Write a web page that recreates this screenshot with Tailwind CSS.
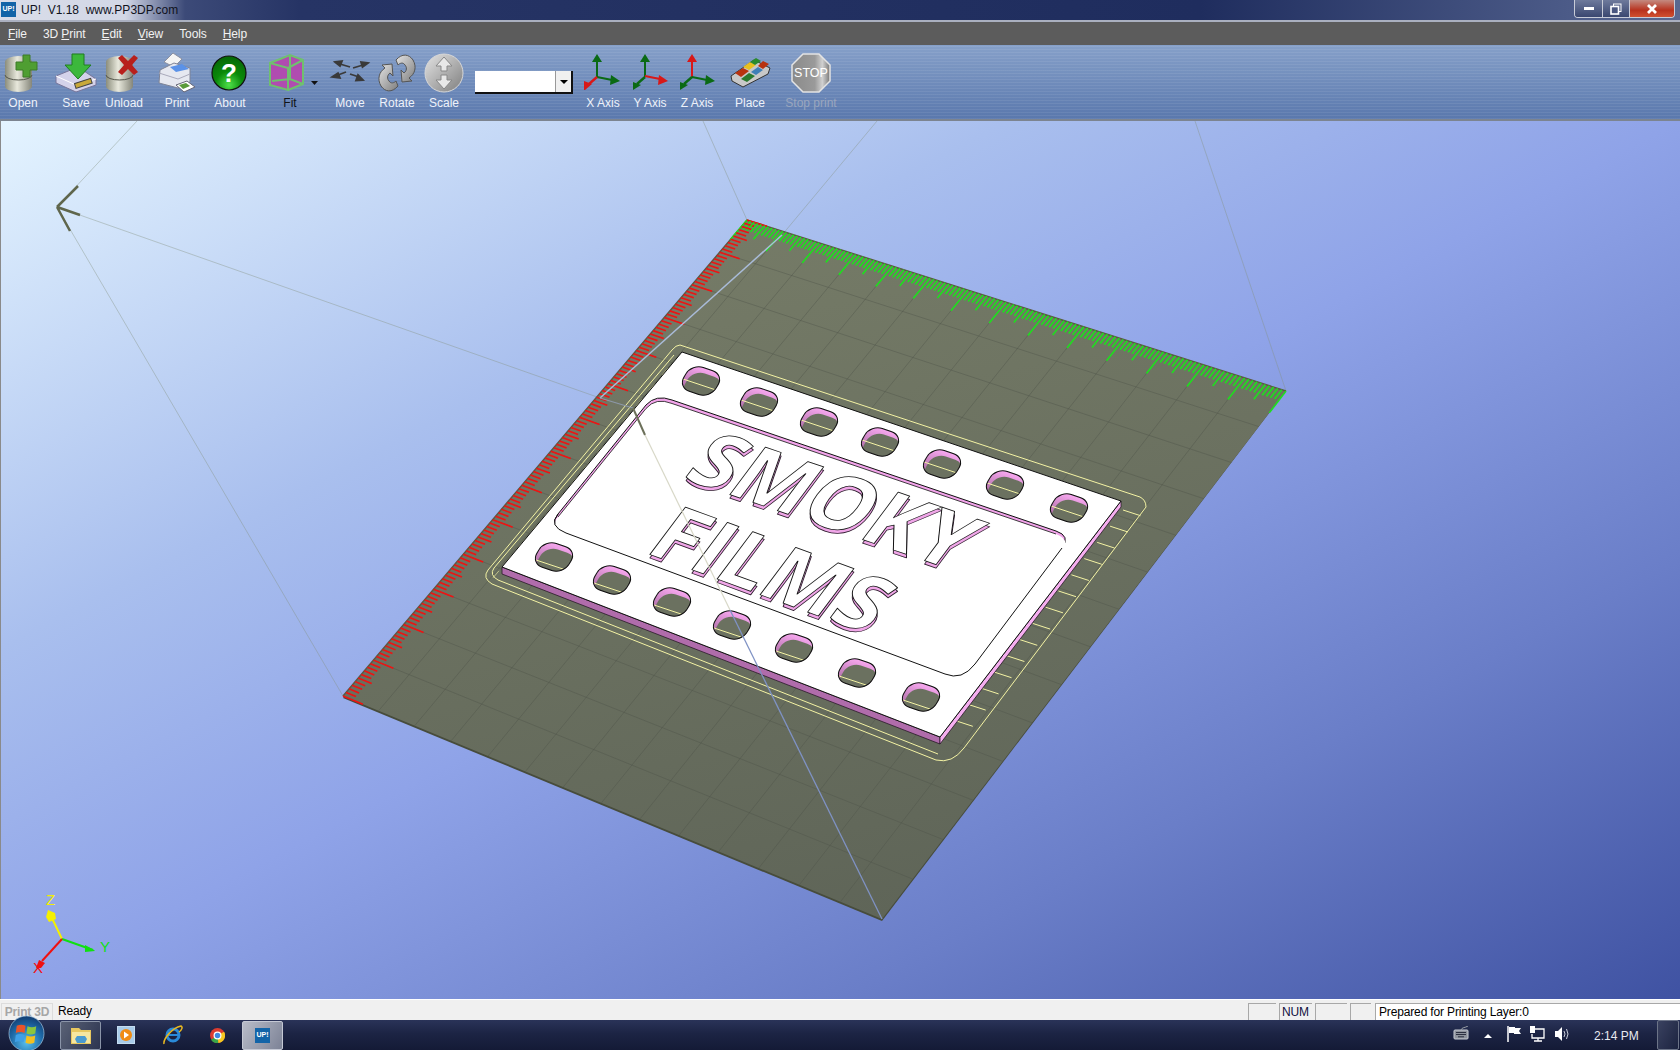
<!DOCTYPE html>
<html lang="en">
<head>
    <meta charset="UTF-8">
    <title>UP! V1.18 www.PP3DP.com</title>
    <script src="https://cdn.jsdelivr.net/npm/@tailwindcss/browser@4"></script>
</head>
<body class="w-[1680px] h-[1050px] overflow-hidden flex flex-col font-['Liberation_Sans',sans-serif] text-[12px]">

    <!-- shared gradients -->
    <svg class="absolute w-0 h-0">
        <defs>
            <linearGradient id="can" x1="0" x2="1" y1="0" y2="0"><stop offset="0" stop-color="#8b8d7c"/><stop offset=".45" stop-color="#e8e8dc"/><stop offset="1" stop-color="#85867a"/></linearGradient>
            <linearGradient id="gray" x1="0" x2="1" y1="0" y2="1"><stop offset="0" stop-color="#e4e4e4"/><stop offset="1" stop-color="#7e7e7e"/></linearGradient>
            <radialGradient id="green" cx=".5" cy=".85" r=".8"><stop offset="0" stop-color="#4fe04a"/><stop offset=".5" stop-color="#0a8a0a"/><stop offset="1" stop-color="#066a06"/></radialGradient>
            <radialGradient id="orb" cx=".5" cy=".75" r=".75"><stop offset="0" stop-color="#58c0f0"/><stop offset=".6" stop-color="#1e6aa8"/><stop offset="1" stop-color="#123c70"/></radialGradient>
            <linearGradient id="stop" x1="0" x2="1" y1="0" y2="0"><stop offset="0" stop-color="#8a8a8a"/><stop offset=".6" stop-color="#9a9a9a"/><stop offset=".8" stop-color="#d0d0d0"/><stop offset="1" stop-color="#777"/></linearGradient>
            <linearGradient id="deck" gradientUnits="userSpaceOnUse" x1="747" y1="220" x2="882" y2="919"><stop offset="0" stop-color="#757b67"/><stop offset="1" stop-color="#5f6558"/></linearGradient>
            <linearGradient id="wall" x1="0" x2="0" y1="0" y2="1"><stop offset="0" stop-color="#f8a8f0"/><stop offset="1" stop-color="#a86aa0"/></linearGradient>
        </defs>
    </svg>

    <!-- title bar -->
    <header class="h-[22px] shrink-0 flex items-start border-b-2 border-b-[#aab0c0] bg-[linear-gradient(to_right,#d9dde9_0,#d2d7e6_125px,#3c4a78_185px,#263465_300px,#1f2d5e_1200px,#4c5b88_1570px,#5a6890_1680px)]">
        <div class="w-[15px] h-[15px] mt-[2px] ml-[1px] bg-[#1264a8] text-white text-[7px] font-bold flex items-center justify-center">UP!</div>
        <div class="ml-[5px] mt-[2px] text-[12px] leading-[16px] text-[#10121c] whitespace-pre">UP!  V1.18  www.PP3DP.com</div>
        <div class="ml-auto mr-[5px] flex h-[18px] border border-t-0 border-[#c8ccd8] rounded-b-[4px] overflow-hidden">
            <div class="w-[28px] flex items-center justify-center border-r border-[#c8ccd8] bg-[linear-gradient(#6e7a9c,#3a4770)]"><div class="w-[10px] h-[3px] bg-white"></div></div>
            <div class="w-[27px] flex items-center justify-center border-r border-[#c8ccd8] bg-[linear-gradient(#6e7a9c,#3a4770)]">
                <svg viewBox="0 0 12 12" class="w-[12px] h-[12px]"><rect x="3.5" y="1" width="7.5" height="7.5" fill="none" stroke="#fff"/><rect x="1" y="3.5" width="7.5" height="7.5" fill="#4a5780" stroke="#fff" stroke-width="1.6"/></svg>
            </div>
            <div class="w-[44px] flex items-center justify-center bg-[linear-gradient(#c48a80,#b8321e_60%,#d05030)]">
                <svg viewBox="0 0 12 12" class="w-[12px] h-[12px]"><path d="M2 2l8 8M10 2l-8 8" stroke="#fff" stroke-width="2.8"/></svg>
            </div>
        </div>
    </header>

    <!-- menu -->
    <nav class="h-[23px] shrink-0 bg-[#5c5c5c] text-[#f2f2f2] flex items-center pl-[8px] gap-[16px] text-[12px] tracking-[-.1px]">
        <span><u>F</u>ile</span><span>3D <u>P</u>rint</span><span><u>E</u>dit</span><span><u>V</u>iew</span><span>Tools</span><span><u>H</u>elp</span>
    </nav>

    <!-- toolbar -->
    <div class="h-[76px] shrink-0 flex pt-[5px] text-[#eef2fa] border-b-2 border-b-[#7c8490] [background:repeating-linear-gradient(0deg,rgba(255,255,255,.07)_0_1px,transparent_1px_3px),linear-gradient(#86a0c9,#5a78ad)]">
        <div class="w-[46px] flex flex-col items-center">
            <svg viewBox="1 50 44 44" class="w-[44px] h-[44px] shrink-0 overflow-visible">
                <path d="M5 62a13.500 6 0 0 1 27 0v24a13.500 6 0 0 1-27 0z" fill="url(#can)"/><path d="M5 75a13.500 5 0 0 0 27 0" fill="none" stroke="#55564c"/>
                <path d="M23 55h7v7h7v8h-7v7h-7v-7h-7v-8h7z" fill="#4f9e32" stroke="#3c7a26"/>
            </svg>
            <span class="leading-[14px] mt-[2px]">Open</span>
        </div>
        <div class="w-[60px] flex flex-col items-center">
            <svg viewBox="54 50 44 44" class="w-[44px] h-[44px] shrink-0 overflow-visible">
                <path d="M56 76l22-9 18 12v6l-20 7-20-9z" fill="#d4d2ea" stroke="#77759a"/><path d="M56 76l20 9 20-6" fill="none" stroke="#fff"/>
                <rect x="75" y="81" width="17" height="5" fill="#c8a83a" stroke="#444" transform="rotate(-18 83 84)"/>
                <path d="M72 54h12v11h7l-13 14-13-14h7z" fill="#3cb83c" stroke="#1f7d1f"/>
            </svg>
            <span class="leading-[14px] mt-[2px]">Save</span>
        </div>
        <div class="w-[36px] flex flex-col items-center">
            <svg viewBox="102 50 44 44" class="w-[44px] h-[44px] shrink-0 overflow-visible">
                <path d="M106 62a13.500 6 0 0 1 27 0v24a13.500 6 0 0 1-27 0z" fill="url(#can)"/><path d="M106 75a13.500 5 0 0 0 27 0" fill="none" stroke="#55564c"/>
                <path d="M118 58l4-3 6 6 6-6 4 3-6 7 6 7-4 3-6-6-6 6-4-3 6-7z" fill="#b8201c"/>
            </svg>
            <span class="leading-[14px] mt-[2px]">Unload</span>
        </div>
        <div class="w-[70px] flex flex-col items-center">
            <svg viewBox="155 50 44 44" class="w-[44px] h-[44px] shrink-0 overflow-visible">
                <path d="M164 62l9-9 9 6-8 8z" fill="#f4f4f4" stroke="#8a8fa0"/>
                <path d="M160 70l14-7 16 5v14l-12 6-19-5z" fill="#e6e8f0" stroke="#7f8496"/>
                <path d="M170 67l12-3 7 5-13 3z" fill="#5b92e8"/><path d="M159 73l19 6 12-5" fill="none" stroke="#aab"/>
                <path d="M176 85l11-4 8 6-11 5z" fill="#fff" stroke="#667"/><path d="M179 85l7-2 4 3-7 3z" fill="#5a9a3a"/>
            </svg>
            <span class="leading-[14px] mt-[2px]">Print</span>
        </div>
        <div class="w-[36px] flex flex-col items-center">
            <svg viewBox="208 50 44 44" class="w-[44px] h-[44px] shrink-0 overflow-visible">
                <circle cx="229" cy="73" r="17" fill="url(#green)" stroke="#111" stroke-width="1.2"/>
                <text x="229" y="82" text-anchor="middle" font-family="Liberation Sans" font-weight="700" font-size="26" fill="#fff">?</text>
            </svg>
            <span class="leading-[14px] mt-[2px]">About</span>
        </div>
        <div class="w-[84px] flex flex-col items-center text-[#101418]">
            <svg viewBox="268 50 44 44" class="w-[44px] h-[44px] shrink-0 overflow-visible">
                <path d="M270 63l20-8 13 5v24l-15 6-18-5z" fill="#b04cb0"/>
                <path d="M270 63l18 5v22l-18-5zM288 68l15-8M290 55v24M272 81l18-2 13 5M270 63l20-8 13 5v24l-15 6" fill="none" stroke="#6fc06f" stroke-width="2"/>
                <path d="M311 81h7l-3.500 4z" fill="#111"/>
            </svg>
            <span class="leading-[14px] mt-[2px]">Fit</span>
        </div>
        <div class="w-[36px] flex flex-col items-center">
            <svg viewBox="328 50 44 44" class="w-[44px] h-[44px] shrink-0 overflow-visible">
                <g fill="#3a3a3a" stroke="#3a3a3a" stroke-width="1.800">
                    <path d="M335 62l7-1-2 5z"/><path d="M340 64l10 3"/>
                    <path d="M368 63l-7-1 1.500 5z"/><path d="M363 65l-10 3"/>
                    <path d="M332 77l6-4 2 5z"/><path d="M338 75l8-3"/>
                    <path d="M363 80l-7 .5 2-5.500z"/><path d="M359 77l-9-3"/>
                </g>
            </svg>
            <span class="leading-[14px] mt-[2px]">Move</span>
        </div>
        <div class="w-[58px] flex flex-col items-center">
            <svg viewBox="375 50 44 44" class="w-[44px] h-[44px] shrink-0 overflow-visible">
                <path d="M396 60c6-7 13-6 17 0 4 7 2 14-4 18l3 3-10 1-1-12 3 3c3-2 3-6 1-8-2-3-5-2-7 0z" fill="url(#gray)" stroke="#555"/>
                <path d="M398 86c-6 7-13 6-17 0-4-7-2-14 4-18l-3-3 10-1 1 12-3-3c-3 2-3 6-1 8 2 3 5 2 7 0z" fill="url(#gray)" stroke="#555"/>
            </svg>
            <span class="leading-[14px] mt-[2px]">Rotate</span>
        </div>
        <div class="w-[36px] flex flex-col items-center">
            <svg viewBox="422 50 44 44" class="w-[44px] h-[44px] shrink-0 overflow-visible">
                <circle cx="444" cy="73" r="19" fill="url(#gray)" stroke="#d8d8d8"/>
                <path d="M444 57l8 9h-5v5h-6v-5h-5zM444 89l8-9h-5v-5h-6v5h-5z" fill="#e8e8e8" stroke="#888"/>
            </svg>
            <span class="leading-[14px] mt-[2px]">Scale</span>
        </div>
        <div class="ml-[13px] mt-[21px] w-[98px] h-[23px] shrink-0 bg-white flex justify-end border-r-2 border-b-2 border-[#111]">
            <div class="w-[16px] h-full bg-[#f0f0f0] border-l border-[#999] flex items-center justify-center"><div class="w-0 h-0 border-x-[4px] border-x-transparent border-t-[4px] border-t-black"></div></div>
        </div>
        <div class="w-[60px] flex flex-col items-center">
            <svg viewBox="581 50 44 44" class="w-[44px] h-[44px] shrink-0 overflow-visible">
                <path d="M597 77V60" stroke="#0a6a14" stroke-width="2"/><path d="M592 62l5-8 5 8z" fill="#0a6a14"/>
                <path d="M597 77l15 3" stroke="#0a6a14" stroke-width="2"/><path d="M611 75l9 6-10 4z" fill="#0a6a14"/>
                <path d="M597 77l-8 7" stroke="#d81818" stroke-width="2.400"/><path d="M584 81l8 3-7 6-1 0z" fill="#d81818"/>
            </svg>
            <span class="leading-[14px] mt-[2px]">X Axis</span>
        </div>
        <div class="w-[34px] flex flex-col items-center">
            <svg viewBox="580 50 44 44" class="w-[44px] h-[44px] shrink-0 overflow-visible">
                <path d="M597 77V60" stroke="#0a6a14" stroke-width="2"/><path d="M592 62l5-8 5 8z" fill="#0a6a14"/>
                <path d="M597 76l15 3" stroke="#d81818" stroke-width="2"/><path d="M611 75l9 6-10 4z" fill="#d81818"/>
                <path d="M597 77l-8 7" stroke="#0a6a14" stroke-width="2.400"/><path d="M585 82l8 3-8 5z" fill="#0a6a14"/>
            </svg>
            <span class="leading-[14px] mt-[2px]">Y Axis</span>
        </div>
        <div class="w-[60px] flex flex-col items-center">
            <svg viewBox="580 50 44 44" class="w-[44px] h-[44px] shrink-0 overflow-visible">
                <path d="M597 77V60" stroke="#d81818" stroke-width="2"/><path d="M592 62l5-8 5 8z" fill="#d81818"/>
                <path d="M597 77l15 3" stroke="#0a6a14" stroke-width="2"/><path d="M611 75l9 6-10 4z" fill="#0a6a14"/>
                <path d="M597 77l-8 7" stroke="#0a6a14" stroke-width="2.400"/><path d="M585 82l8 3-8 5z" fill="#0a6a14"/>
            </svg>
            <span class="leading-[14px] mt-[2px]">Z Axis</span>
        </div>
        <div class="w-[46px] flex flex-col items-center">
            <svg viewBox="728 50 44 44" class="w-[44px] h-[44px] shrink-0 overflow-visible">
                <path d="M731 76l23-16 16 8-2 6-25 13-11-6z" fill="#c8c8c8" stroke="#333"/>
                <path d="M735 73l8-5 6 3-8 6z" fill="#b8320f"/><path d="M741 79l8-6 6 3-8 6z" fill="#2a7a2e"/>
                <path d="M743 67l7-5 6 3-7 5z" fill="#e8c020"/><path d="M751 72l7-5 5 3-7 5z" fill="#3f7fb8"/>
                <path d="M750 62l6-4 5 3-6 4z" fill="#2a8a2e"/><path d="M758 66l5-5 6 3-6 5z" fill="#b8320f"/>
            </svg>
            <span class="leading-[14px] mt-[2px]">Place</span>
        </div>
        <div class="w-[76px] flex flex-col items-center text-[#9aa6be]">
            <svg viewBox="789 50 44 44" class="w-[44px] h-[44px] shrink-0 overflow-visible">
                <path d="M803 54h16l11 11v16l-11 11h-16l-11-11v-16z" fill="url(#stop)" stroke="#e4e4e4" stroke-width="1.500"/>
                <text x="811" y="77" text-anchor="middle" font-family="Liberation Sans" font-size="12.500" fill="#fff">STOP</text>
            </svg>
            <span class="leading-[14px] mt-[2px]">Stop print</span>
        </div>
    </div>

    <!-- 3D view -->
    <main class="flex-1 min-h-0 border-l border-[#8a8a8a] bg-[linear-gradient(to_bottom_right,#e4f4ff_0%,#a9bfee_30%,#8fa3e8_50%,#6a7ec8_75%,#3f52a2_100%)]">
        <svg id="scene" viewBox="1 121 1679 878" class="w-full h-full block">
            <g fill="none" stroke="#85907f" stroke-opacity=".4">
                <path d="M57 207L137 121M57 207L343 696M57 207L600 398M747 220L703 121M782 235L877 121M1286 391L1195 121"/>
            </g>
            <path d="M57 207L78 186M57 207L80 215M57 207L70 231" stroke="#5f664c" stroke-width="2.500" fill="none"/>

            <path d="M747 220L1286 391L882 921L343 698z" fill="#474c3c"/>
            <path d="M747 220L1286 391L882 919L343 696z" fill="url(#deck)"/>
            <path d="M343 696L747 220L1286 391" fill="none" stroke="#5a5a44" stroke-width="1.500"/>
            <g id="grid" stroke="#4d5248" stroke-opacity=".4" fill="none"></g>
            <g id="ticks" fill="none" stroke-width="1.600"></g>

            <!-- brim lines round the part -->
            <g id="brim" fill="none" stroke="#f4f3a4" stroke-width="1">
                <path d="M680 345L1140 497Q1146 500 1146 507L964 748Q952 764 936 760L492 584Q482 578 488 570L672 350Q676 345 680 345z"/>
                <path d="M938 754L498 580Q489 575 494 568L674 355"/>
            </g>

            <!-- plate -->
            <path d="M502 567L940 737L940 744L502 574z" fill="#b06cab" stroke="#2a1a2a" stroke-width=".8"/>
            <path d="M940 737L1121 501L1121 507L940 744z" fill="#f6aef0" stroke="#2a1a2a" stroke-width=".8"/>
            <path d="M682 352L1121 501L940 737L502 567z" fill="#fff" stroke="#111" stroke-width="1"/>
            <g id="holes"></g>

            <!-- recessed frame -->
            <path d="M672 400L1056 531Q1071 536 1062 548L975 664Q962 681 945 674L566 533Q548 526 558 514L646 405Q656 394 672 400z" fill="#f2a4ea" stroke="#111"/>
            <path d="M672 403.500L1056 534Q1071 540 1062 551L975 667Q962 684 945 677L566 536Q548 529 558 517L646 408.500Q656 397 672 403.500z" fill="#fff"/>
            <path d="M558 517L646 408.500Q656 397 672 403.500L1056 534" fill="none" stroke="#111" stroke-width=".8"/>
            <path d="M1062 548L975 664Q962 681 945 674L566 533Q548 526 558 514" fill="none" stroke="#111"/>

            <!-- lettering on the part -->
            <g font-family="Open Sans" font-weight="700" font-size="83" stroke-linejoin="round">
                <g fill="#f0a6e8" stroke="#2a1a2a" stroke-width=".9">
                    <text transform="matrix(.92 .312 -.6 .8 681 481.500)">SMOKY</text>
                    <text transform="matrix(.92 .335 -.6 .8 643 555.500)">FILMS</text>
                </g>
                <g fill="#fff" stroke="#111" stroke-width=".9">
                    <text transform="matrix(.92 .312 -.6 .8 681 478)">SMOKY</text>
                    <text transform="matrix(.92 .335 -.6 .8 643 552)">FILMS</text>
                </g>
            </g>

            <!-- wireframe lines over the model -->
            <path d="M782 235L600 398" stroke="#a9bbd8" stroke-width="1.500" fill="none"/>
            <path d="M600 398L633 408" stroke="#8c98a8" stroke-width="1.200" fill="none"/>
            <path d="M633 408L645 435" stroke="#6c705a" stroke-width="2" fill="none"/>
            <path d="M645 435L730 610" stroke="#d8d8c8" stroke-width="1.200" fill="none"/>
            <path d="M730 610L882 919" stroke="#7f92c4" stroke-width="1.300" fill="none"/>

            <!-- axis triad -->
            <path d="M62 939L50 914" stroke="#f4f000" stroke-width="2"/>
            <path d="M48 910l7 3 1 6-7 3-3-5z" fill="#f4f000"/>
            <path d="M62 939L93 950" stroke="#10e010" stroke-width="2"/>
            <path d="M85 945l9 5 1 1-10 1z" fill="#10e010"/>
            <path d="M62 939L42 961" stroke="#f01010" stroke-width="2"/>
            <path d="M39 960l6 3-4 5-5 0z" fill="#f01010"/>
            <g font-family="Liberation Sans" font-size="15">
                <text x="46" y="905" fill="#f4f000">Z</text>
                <text x="100" y="952" fill="#10e010">Y</text>
                <text x="33" y="973" fill="#f01010">X</text>
            </g>
        </svg>
    </main>

    <!-- status bar -->
    <div class="h-[21px] shrink-0 bg-[#f0f0f0] border-t border-white flex items-end text-[12px] tracking-[-.15px] leading-[16px] text-black">
        <div class="w-[52px] h-[17px] ml-[1px] text-center text-[#a6a6a6] font-bold border border-[#dcdcdc] border-b-0 text-[12px] tracking-[-.2px]">Print 3D</div>
        <div class="ml-[5px] h-[17px]">Ready</div>
        <div class="ml-auto w-[28px] h-[17px] border-l border-t border-[#a8a8a8]"></div>
        <div class="ml-[3px] w-[33px] h-[17px] border-l border-t border-[#a8a8a8] pl-[2px] text-[#101040]">NUM</div>
        <div class="ml-[3px] w-[32px] h-[17px] border-l border-t border-[#a8a8a8]"></div>
        <div class="ml-[3px] w-[21px] h-[17px] border-l border-t border-[#a8a8a8]"></div>
        <div class="ml-[4px] w-[305px] h-[17px] border-l border-t border-[#a8a8a8] bg-white pl-[3px]">Prepared for Printing Layer:0</div>
    </div>

    <!-- taskbar -->
    <footer class="relative h-[30px] shrink-0 flex items-center text-white bg-[linear-gradient(#2a3358,#1c2444_45%,#141a36)]">
        <svg viewBox="0 0 38 38" class="absolute left-[8px] top-[-5px] w-[37px] h-[37px]">
            <circle cx="19" cy="19" r="18" fill="url(#orb)" stroke="#a8c8e0" stroke-opacity=".7"/>
            <path d="M9 11q4.500-2 9 0l-1 7.500q-4.500-2-9 0z" fill="#e8542a"/>
            <path d="M20 11.500q4.500 2 9 0l-1 7.500q-4.500 2-9 0z" fill="#8cc63e"/>
            <path d="M8 20.500q4.500-2 9 0l-1 7.500q-4.500-2-9 0z" fill="#3fa0e8"/>
            <path d="M19 21q4.500 2 9 0l-1 7.500q-4.500 2-9 0z" fill="#f4c020"/>
        </svg>
        <div class="ml-[60px] w-[41px] h-[29px] rounded-[2px] border border-[#8a94a8] bg-[linear-gradient(120deg,#5a6276,#2c3450)] flex items-center justify-center">
            <svg viewBox="0 0 24 22" class="w-[24px] h-[22px]"><path d="M2 4h8l2 2h10v14H2z" fill="#e8c860"/><rect x="3" y="8" width="18" height="11" fill="#f6e6a0"/><path d="M8 12h8l2 3-2 4H8l-2-4z" fill="#4a9ad0"/></svg>
        </div>
        <svg viewBox="0 0 18 18" class="ml-[16px] w-[18px] h-[18px]"><rect width="18" height="18" fill="#c4dcf0"/><rect x="1" y="1" width="16" height="16" fill="#a8cbe8"/><circle cx="9" cy="9" r="6" fill="#f08c14"/><path d="M7 5.500l5 3.500-5 3.500z" fill="#fff"/></svg>
        <svg viewBox="0 0 20 20" class="ml-[28px] w-[20px] h-[20px]"><circle cx="10" cy="10" r="6" fill="none" stroke="#2a8ad8" stroke-width="3"/><path d="M5 10h10" stroke="#2a8ad8" stroke-width="2"/><path d="M1 19C0 14 9 3 18 1c2 1 1 4-2 6" fill="none" stroke="#e8b820" stroke-width="1.500"/></svg>
        <svg viewBox="0 0 16 16" class="ml-[27px] w-[15px] h-[15px]"><circle cx="8" cy="8" r="8" fill="#dc3c30"/><path d="M8 8L1 12.500A8 8 0 0 0 9 16z" fill="#3aa648"/><path d="M8 8L9 16A8 8 0 0 0 15 4z" fill="#f6c820"/><circle cx="8" cy="8" r="3.600" fill="#3f88e0" stroke="#fff" stroke-width="1.300"/></svg>
        <div class="ml-[17px] w-[41px] h-[29px] rounded-[2px] border border-[#c4c8d4] bg-[linear-gradient(120deg,#b8bcc8,#7c8296)] flex items-center justify-center">
            <div class="w-[15px] h-[15px] bg-[#1264a8] text-white text-[7px] font-bold flex items-center justify-center">UP!</div>
        </div>
        <svg viewBox="0 0 16 14" class="absolute left-[1453px] top-[6px] w-[16px] h-[14px]"><rect x="1" y="4" width="14" height="9" rx="1" fill="#8e939c" stroke="#c8ccd4"/><path d="M3 6.500h10M3 8.500h10M5 10.800h6" stroke="#2c3040"/><path d="M8 4C9 1 12 2 15 0" stroke="#9aa0a8" fill="none"/></svg>
        <div class="absolute left-[1484px] top-[14px] w-0 h-0 border-x-[4px] border-x-transparent border-b-[4px] border-b-white"></div>
        <svg viewBox="0 0 16 18" class="absolute left-[1506px] top-[5px] w-[16px] h-[18px]"><path d="M2 1v16" stroke="#fff" stroke-width="1.500"/><path d="M3 2h6v1h6l-2 3 2 3H8V8H3z" fill="#fff"/></svg>
        <svg viewBox="0 0 16 16" class="absolute left-[1529px] top-[6px] w-[16px] h-[16px]"><rect x="1" y="0" width="5" height="7" fill="#fff"/><path d="M6 3h9v9H3V8" fill="none" stroke="#fff" stroke-width="1.300"/><path d="M9 12v3M5 15h8" stroke="#fff" stroke-width="1.300"/></svg>
        <svg viewBox="0 0 16 16" class="absolute left-[1554px] top-[6px] w-[16px] h-[16px]"><path d="M1 5h3l4-4v14l-4-4H1z" fill="#fff"/><path d="M10 5q2 3 0 6M12.500 3q3 5 0 10" fill="none" stroke="#c8ccd8"/></svg>
        <div class="absolute left-[1594px] top-[7px] text-[#e8eaf0] text-[12px]">2:14 PM</div>
        <div class="absolute left-[1657px] top-0 w-[22px] h-[30px] rounded-[2px] border border-[#6c7488] bg-[linear-gradient(120deg,#3a4260,#1c2340)]"></div>
    </footer>

    <script>
        const NS = 'http://www.w3.org/2000/svg';

        function add(parent, tag, attrs) {
            const el = document.createElementNS(NS, tag);
            for (const k in attrs) el.setAttribute(k, attrs[k]);
            parent.appendChild(el);
            return el;
        }

        // maps the unit square onto the four corners of the build platform
        function quad(p0, p1, p2, p3) {
            const dx1 = p1[0] - p2[0], dx2 = p3[0] - p2[0], sx = p0[0] - p1[0] + p2[0] - p3[0];
            const dy1 = p1[1] - p2[1], dy2 = p3[1] - p2[1], sy = p0[1] - p1[1] + p2[1] - p3[1];
            const den = dx1 * dy2 - dx2 * dy1;
            const g = (sx * dy2 - dx2 * sy) / den, h = (dx1 * sy - sx * dy1) / den;
            const a = p1[0] - p0[0] + g * p1[0], b = p3[0] - p0[0] + h * p3[0];
            const d = p1[1] - p0[1] + g * p1[1], e = p3[1] - p0[1] + h * p3[1];
            return (u, v) => {
                const w = g * u + h * v + 1;
                return [(a * u + b * v + p0[0]) / w, (d * u + e * v + p0[1]) / w];
            };
        }

        const deck = quad([747, 220], [1286, 391], [882, 919], [343, 696]);

        function seg(parent, p, q, attrs) {
            add(parent, 'line', Object.assign({ x1: p[0], y1: p[1], x2: q[0], y2: q[1] }, attrs || {}));
        }

        // grid, 14 cells each way
        const grid = document.getElementById('grid');
        for (let i = 1; i < 14; i++) {
            seg(grid, deck(i / 14, 0), deck(i / 14, 1));
            seg(grid, deck(0, i / 14), deck(1, i / 14));
        }

        // rulers, one tick per mm
        const ticks = document.getElementById('ticks');
        for (let i = 0; i <= 140; i++) {
            const t = i / 140;
            const gl = i % 10 == 0 ? .044 : i % 5 == 0 ? .03 : .019;
            const rl = i % 10 == 0 ? .04 : i % 5 == 0 ? .027 : .02;
            seg(ticks, deck(t, 0), deck(t, gl), { stroke: '#1ee01e' });
            seg(ticks, deck(0, t), deck(rl, t), { stroke: '#f01212' });
        }

        // ladder lines of the brim, right and left side
        const brim = document.getElementById('brim');
        for (let i = 0; i < 14; i++) {
            const x = 1123 - 12.9 * i, y = 510 + 16.2 * i;
            seg(brim, [x, y], [x + 17.5, y + 5.7]);
        }
        for (let i = 0; i < 14; i++) {
            const x = 668 - 13 * i, y = 368 + 15.6 * i;
            seg(brim, [x, y], [x - 6, y + 7], { 'stroke-opacity': .6 });
        }

        // sprocket holes
        const top_row = [[701, 381], [759, 402], [819, 422], [880, 442], [942, 464], [1005, 485], [1069, 508]];
        const bottom_row = [[554, 557], [612, 580], [672, 602], [732, 625], [794, 648], [857, 673], [921, 697]];
        const holes = document.getElementById('holes');
        const defs = document.querySelector('#scene').appendChild(document.createElementNS(NS, 'defs'));

        function hole(c, lineY, n) {
            const m = `matrix(.947 .321 -.5 .85 ${c[0]} ${c[1]})`;
            const shape = { x: -17, y: -14, width: 34, height: 28, rx: 12, transform: m };
            const clip = add(defs, 'clipPath', { id: 'hole' + n });
            add(clip, 'rect', shape);
            add(holes, 'rect', Object.assign({ fill: 'url(#wall)' }, shape));
            const g = add(holes, 'g', { 'clip-path': `url(#hole${n})` });
            const inner = add(g, 'g', { transform: 'translate(1.500 6)' });
            add(inner, 'rect', Object.assign({ fill: '#6b7160' }, shape));
            seg(g, [c[0] - 24, c[1] + lineY - 8], [c[0] + 24, c[1] + lineY + 8], { stroke: '#f4f3a4' });
            add(holes, 'rect', Object.assign({ fill: 'none', stroke: '#111' }, shape));
        }

        top_row.forEach((c, i) => hole(c, 4, 't' + i));
        bottom_row.forEach((c, i) => hole(c, 9, 'b' + i));
    </script>
</body>
</html>
